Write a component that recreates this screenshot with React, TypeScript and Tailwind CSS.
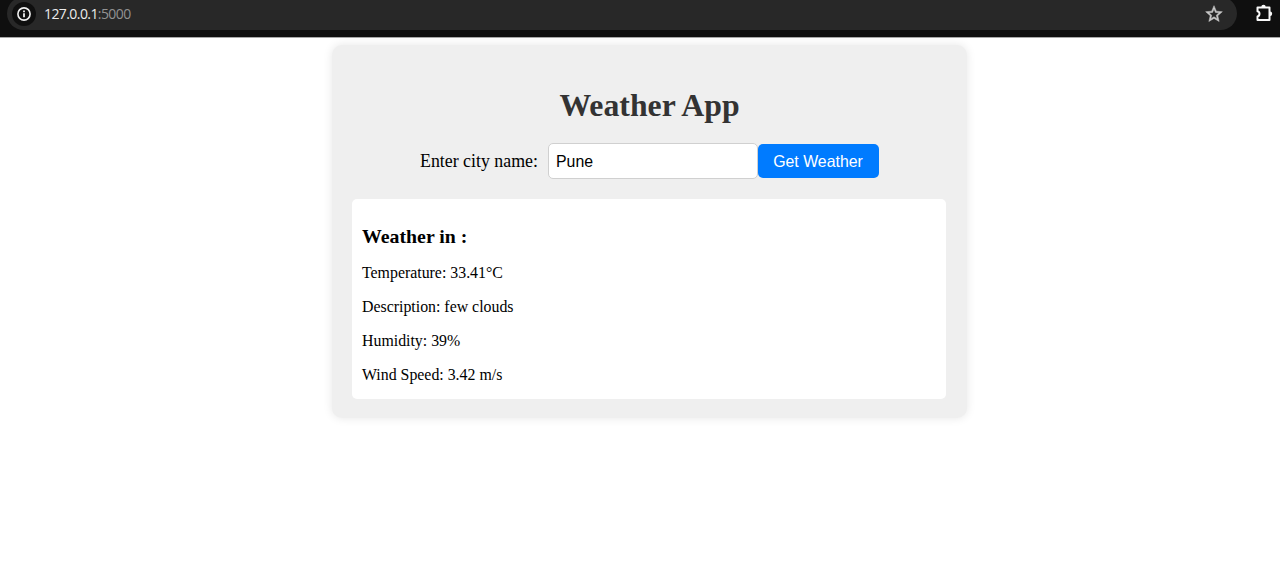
import { useState } from "react";

const readings = [
  "Temperature: 33.41°C",
  "Description: few clouds",
  "Humidity: 39%",
  "Wind Speed: 3.42 m/s",
];

function BrowserBar() {
  return (
    <header className="flex h-[38px] items-start overflow-hidden border-b border-[#a8a8a8] bg-[#0f0f0f]">
      <div className="-mt-[3px] ml-[7px] flex h-[33px] w-[1230px] items-center rounded-full bg-[#282828] pr-[13px] pl-[5px]">
        <span className="flex size-6 items-center justify-center rounded-full bg-[#0f0f0f]">
          <svg viewBox="0 0 14 14" className="size-[14px]" fill="none" stroke="#f0f0f0">
            <circle cx="7" cy="7" r="6.1" strokeWidth="1.6" />
            <path d="M7 6.200v4.100M7 3.600v1.600" strokeWidth="1.8" />
          </svg>
        </span>
        <span className="ml-2 font-['Open_Sans',sans-serif] text-[14px] leading-5 tracking-[-0.58px] text-[#ececec]">
          127.0.0.1<span className="text-[#929292]">:5000</span>
        </span>
        <svg viewBox="0 0 24 24" className="mt-px ml-auto size-5" fill="#c8c8c8" stroke="#c8c8c8" strokeWidth="0.6">
          <path d="M22 9.24l-7.19-.62L12 2 9.19 8.63 2 9.24l5.46 4.73L5.82 21 12 17.27 18.18 21l-1.63-7.03L22 9.24zM12 15.4l-3.76 2.27 1-4.28-3.32-2.88 4.38-.38L12 6.1l1.71 4.04 4.38.38-3.32 2.88 1 4.28L12 15.4z" />
        </svg>
      </div>
      <svg viewBox="0 0 20 20" className="mt-[3px] ml-[17px] size-5 shrink-0" fill="none" stroke="#f8f8f8">
        <path
          d="M3.500 4.500h12v12.500h-12v-3.600c1.400-.3 2-1.300 2-2.600S4.900 8.500 3.500 8.200z"
          strokeWidth="2"
          strokeLinejoin="round"
        />
        <path d="M7.300 4a2.200 2.200 0 0 1 4.400 0zM16 8.600a2.200 2.200 0 0 1 0 4.400z" fill="#f8f8f8" stroke="none" />
      </svg>
    </header>
  );
}

export default function App() {
  const [city, setCity] = useState("Pune");

  return (
    <div className="h-[583px] overflow-hidden bg-white font-['Liberation_Serif',serif] text-black">
      <BrowserBar />
      <main className="mt-[7px] ml-[332px] h-[373px] w-[635px] rounded-[10px] bg-[#efefef] px-5 pt-[42px] shadow-[0_0_10px_rgba(0,0,0,0.1)]">
        <h1 className="text-center text-[31.75px] leading-[38px] font-bold text-[#333333]">Weather App</h1>
        <form className="mt-[18px] flex items-center justify-center" onSubmit={(e) => e.preventDefault()}>
          <label htmlFor="city" className="w-[128px] text-[17.85px] leading-6">
            Enter city name:
          </label>
          <input
            id="city"
            value={city}
            onChange={(e) => setCity(e.target.value)}
            className="h-9 w-[210px] rounded-[5px] border border-[#d0d0d0] bg-white px-[7px] pt-0.5 font-['Liberation_Sans',sans-serif] text-[15.87px] outline-none"
          />
          <button className="h-[34px] w-[121px] rounded-[5px] bg-[#007bff] pt-0.5 pr-px font-['Liberation_Sans',sans-serif] text-[15.87px] text-white">
            Get Weather
          </button>
        </form>
        <section className="mt-5 h-[200px] w-[594px] rounded-[5px] bg-white px-[10px] pt-[25px]">
          <h2 className="text-[19.84px] leading-6 font-bold">Weather in :</h2>
          <div className="mt-4 flex flex-col gap-4 text-[15.87px] leading-[18px]">
            {readings.map((reading) => (
              <p key={reading}>{reading}</p>
            ))}
          </div>
        </section>
      </main>
    </div>
  );
}
